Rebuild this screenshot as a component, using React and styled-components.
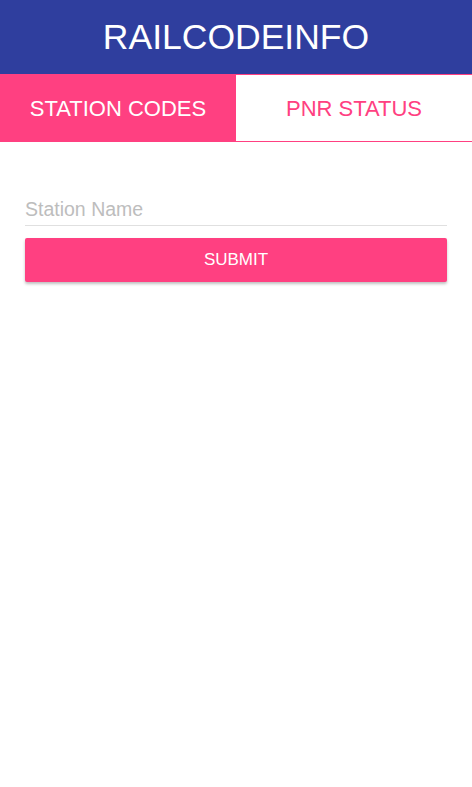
import React, { useState } from "react";
import styled, { createGlobalStyle } from "styled-components";

const GlobalStyle = createGlobalStyle`
  body {
    margin: 0;
    background: #ffffff;
    font-family: "Liberation Sans", Arial, sans-serif;
  }
`;

const Page = styled.div`
  display: flex;
  flex-direction: column;
  min-height: 100vh;
  background: #ffffff;
`;

const Header = styled.header`
  height: 74px;
  background: #2f3e9e;
  display: flex;
  align-items: center;
  justify-content: center;
`;

const Title = styled.h1`
  margin: 0;
  color: #ffffff;
  font-size: 35.5px;
  font-weight: 400;
  letter-spacing: 0;
`;

const TabBar = styled.nav`
  display: grid;
  grid-template-columns: 236px 1fr;
  height: 66px;
  border-top: 1px solid #ff4081;
  border-bottom: 1px solid #ff4081;
`;

const Tab = styled.button`
  border: none;
  margin: 0;
  padding: 2px 0 0;
  font-family: inherit;
  font-size: 22px;
  font-weight: 400;
  cursor: pointer;
  background: ${(props) => (props.active ? "#ff4081" : "#ffffff")};
  color: ${(props) => (props.active ? "#ffffff" : "#ff4081")};
`;

const Form = styled.form`
  display: flex;
  flex-direction: column;
  padding: 51px 25px 0;
`;

const Input = styled.input`
  height: 32px;
  padding: 0;
  border: none;
  border-bottom: 1px solid #e0e0e0;
  font-family: inherit;
  font-size: 19.5px;
  color: #333333;
  outline: none;
  background: transparent;

  &::placeholder {
    color: #bdbdbd;
  }
`;

const SubmitButton = styled.button`
  margin-top: 12px;
  height: 44px;
  border: none;
  border-radius: 2px;
  background: #ff4081;
  color: #ffffff;
  font-family: inherit;
  font-size: 17px;
  box-shadow: 0 2px 3px rgba(0, 0, 0, 0.25);
  cursor: pointer;
`;

const App = () => {
  const [tab, setTab] = useState("codes");
  const [name, setName] = useState("");

  return (
    <>
      <GlobalStyle />
      <Page>
        <Header>
          <Title>RAILCODEINFO</Title>
        </Header>
        <TabBar>
          <Tab active={tab === "codes"} onClick={() => setTab("codes")}>
            STATION CODES
          </Tab>
          <Tab active={tab === "pnr"} onClick={() => setTab("pnr")}>
            PNR STATUS
          </Tab>
        </TabBar>
        <Form onSubmit={(e) => e.preventDefault()}>
          <Input
            placeholder="Station Name"
            value={name}
            onChange={(e) => setName(e.target.value)}
          />
          <SubmitButton type="submit">SUBMIT</SubmitButton>
        </Form>
      </Page>
    </>
  );
};

export default App;
